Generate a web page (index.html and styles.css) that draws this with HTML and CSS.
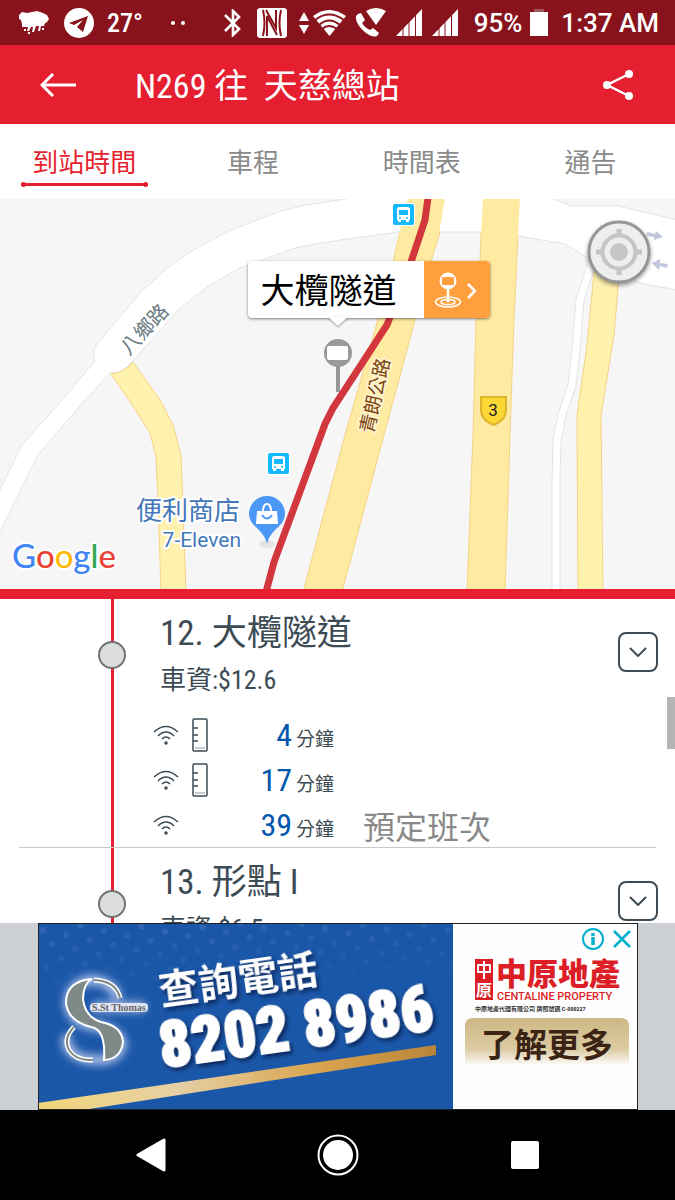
FILE: index.html
```html
<!DOCTYPE html>
<html lang="zh-Hant">
<head>
    <meta charset="UTF-8">
    <meta name="viewport" content="width=device-width, initial-scale=1.0">
    <title>N269 往 天慈總站</title>
    <link rel="stylesheet" href="styles.css">
</head>
<body>
    <!-- 系統狀態列 -->
    <div class="status">
        <svg width="32" height="24" viewBox="0 0 32 24" fill="#fff"><path d="M1 4 4 1 9 2 14 1 19 0 25 2 29 4 31 8 29 11 26 13H4L3 9 1 8z"/><path d="M4 12H27L26 15H23L22 20H20L21 15H18L16 21H14L15 16H13L11 20H9L10 16H4z"/><path d="M6 18h2v2H6zM10 21h2v2h-2zM24 17h2v2h-2z"/></svg>
        <svg class="telegram" width="30" height="30" viewBox="0 0 30 30"><circle cx="15" cy="15" r="15" fill="#fff"/><path d="M5 15 24 8 19 24 13 19 19 12 10 17z" fill="#89131c"/></svg>
        <span class="temp">27°</span>
        <svg class="dots" width="14" height="4" viewBox="0 0 14 4" fill="#fff"><circle cx="2" cy="2" r="2"/><circle cx="12" cy="2" r="2"/></svg>
        <div class="status-right">
            <svg width="18" height="28" viewBox="0 0 18 28" fill="none" stroke="#fff" stroke-width="2.6"><path d="M1 6 15 20 9 26V2l6 6L1 22"/></svg>
            <svg class="nfc" width="30" height="30" viewBox="0 0 30 30"><path d="M2 0h26l2 2v26l-2 2H2l-2-2V2z" fill="#fff"/><path d="M6 2Q9 15 6 28M10 28V8L20 27M9 2 19 20V2M24 2Q21 15 24 28" fill="none" stroke="#89131c" stroke-width="2"/></svg>
            <svg width="10" height="22" viewBox="0 0 10 22" fill="#fff"><path d="M5 0l5 9H0zM5 22l5-9H0z"/></svg>
            <svg class="wifi" width="33" height="26" viewBox="0 0 33 26"><path d="M0 6Q16-6 33 6L16.500 26z" fill="#fff"/><path d="M2 10Q16-1 31 10M6 15Q16 6 27 15M9 19Q16 13 24 19" fill="none" stroke="#89131c" stroke-width="1.8"/></svg>
            <svg width="30" height="29" viewBox="0 0 30 29" fill="#fff"><path d="M10 3Q20-3 30 3L20 17z"/><path d="M2 6 5 5 9 12 6 15Q9 20 14 22L17 20 23 25 21 28Q17 30 10 25Q-1 16 0 8z"/></svg>
            <svg width="26" height="27" viewBox="0 0 26 27"><path d="M0 27 26 0V27z" fill="#fff"/><path d="M7 16V27M13 10V27M19.500 4V27" stroke="#89131c" stroke-width="1"/></svg>
            <svg width="26" height="27" viewBox="0 0 26 27"><path d="M0 27 26 0V27z" fill="#fff"/><path d="M7 16V27M13 10V27M19.500 4V27" stroke="#89131c" stroke-width="1"/></svg>
            <span class="percent">95%</span>
            <svg class="battery" width="18" height="27" viewBox="0 0 18 27"><path d="M4 0h10v4H4z" fill="#a4565c"/><path d="M0 3h18v24H0z" fill="#fff"/></svg>
            <span class="clock">1:37 AM</span>
        </div>
    </div>

    <header class="topbar">
        <button class="icon-btn" aria-label="返回"><svg width="36" height="24" viewBox="0 0 36 24" fill="none" stroke="#fff" stroke-width="3"><path d="M36 12H3M13 1 2 12 13 23"/></svg></button>
        <h1>N269 往&nbsp; 天慈總站</h1>
        <button class="icon-btn share" aria-label="分享"><svg width="30" height="30" viewBox="0 0 30 30" fill="#fff"><path d="M26 4 4 15 26 26" fill="none" stroke="#fff" stroke-width="2.500"/><circle cx="26" cy="4" r="4"/><circle cx="4" cy="15" r="4"/><circle cx="26" cy="26" r="4"/></svg></button>
    </header>

    <nav class="tabs">
        <button class="tab active">到站時間</button>
        <button class="tab">車程</button>
        <button class="tab">時間表</button>
        <button class="tab">通告</button>
    </nav>

    <!-- 地圖 -->
    <div class="map">
        <svg class="map-art" viewBox="0 199 675 390" preserveAspectRatio="xMidYMid slice">
            <defs>
                <g id="bus">
                    <rect x="-1" y="-1" width="23" height="23" rx="3" fill="#fff"/>
                    <rect width="21" height="21" rx="2" fill="#14b9ff"/>
                    <path d="M4 5Q4 3 7 3H14Q17 3 17 5V16H16V18H13V16H8V18H5V16H4z" fill="#fff"/>
                    <path d="M6 6H15V11H6z" fill="#14b9ff"/>
                    <circle cx="7" cy="14" r="1" fill="#14b9ff"/><circle cx="14" cy="14" r="1" fill="#14b9ff"/>
                </g>
            </defs>
            <rect x="0" y="199" width="675" height="390" fill="#f6f6f6"/>
            <path d="M592 262 580 300 576 350 572 385 562 415 557 440 556 480V595" fill="none" stroke="#e4e4e4" stroke-width="9"/>
            <path d="M592 262 580 300 576 350 572 385 562 415 557 440 556 480V595" fill="none" stroke="#fff" stroke-width="7"/>
            <path d="M-2 494 22 445 62 400 95 361Q91 352 97 344L140 293 165 270 190 252 226 232 281 211 306 205 352 198H550L572 206 618 206 677 220V290L640 283 590 259 565 244 518 236 481 232H398L340 240 315 244 295 248 240 268 210 285 180 308 132 362Q122 374 110 373L85 400 37 456-2 536z" fill="#fff" stroke="#e4e4e4"/>
            <g fill="#ffeaa1" stroke="#f6d386">
                <path d="M111 374 129 400 150 433 156 457 158 500 161 592H186L182 480 181 455 173 425 160 400 133 362Q124 373 111 374z" fill="#fff1ae"/>
                <path d="M594 272 587 345 577 415 578 592H603L601 415 614 335 619 276z" fill="#fff1ae"/>
                <path d="M400 232 393 262 375 330 345 435 303 592H342L384 435 415 320 431 262 440 232z"/>
                <path d="M481 232 480 262 476 320 473 435 467 592H505L510 435 514 320 518 235z"/>
            </g>
            <path d="M408 198H445L439 234H399zM483 198H520L518 237H481z" fill="#ffeaa1"/>
            <path d="M428 198 425 220 411 262 387 325 333 408 325 424 274 562 266 592" fill="none" stroke="#d1373d" stroke-width="7"/>
            <g fill="#c3c8de"><path d="M647 232l8 2 1-3 7 6-9 3v-3l-7-1zM668 264l-8-1v-4l-8 4 7 7 1-4 7 2z"/></g>
            <use href="#bus" x="393" y="204"/>
            <use href="#bus" x="268" y="453"/>
            <path d="M481 397H506V410Q506 420 493.500 425Q481 420 481 410z" fill="#fdd835" stroke="#dcb52f" stroke-width="2"/>
            <text class="route-no" x="493" y="416" text-anchor="middle">3</text>
            <text class="road-name" transform="translate(129 356) rotate(-47)">八鄉路</text>
            <text class="highway-name" transform="translate(373 434) rotate(-77)">青朗公路</text>
            <text class="place" x="240" y="520" text-anchor="end">便利商店</text>
            <text class="place-en" x="241" y="547" text-anchor="end">7-Eleven</text>
            <ellipse cx="267" cy="544" rx="8" ry="4" fill="#e4e4e4"/>
            <path d="M267 544Q266 537 258 529Q249 522 249 514A18 18 0 0 1 285 514Q285 522 276 529Q268 537 267 544z" fill="#4c98f6"/>
            <path d="M257 511H277L278 524H256z" fill="#fff"/>
            <path d="M263 512Q263 504 267 504Q271 504 271 512" fill="none" stroke="#fff" stroke-width="2"/>
            <path d="M262 515Q267 522 272 515" fill="none" stroke="#4c98f6" stroke-width="2"/>
            <text class="google" x="12" y="568"><tspan fill="#4285f4">G</tspan><tspan fill="#ea4335">o</tspan><tspan fill="#fbbc05">o</tspan><tspan fill="#4285f4">g</tspan><tspan fill="#34a853">l</tspan><tspan fill="#ea4335">e</tspan></text>
            <path d="M338 362V392" stroke="#959796" stroke-width="4"/>
            <circle cx="338" cy="353" r="14" fill="#989a99"/>
            <rect x="327" y="346" width="21" height="14" rx="2" fill="#fff"/>
        </svg>
        <div class="callout">
            <span class="callout-name">大欖隧道</span>
            <button class="callout-go" aria-label="車站詳情">
                <svg width="44" height="38" viewBox="0 0 44 38" fill="none" stroke="#fff" stroke-width="1.500"><ellipse cx="14" cy="31" rx="12.500" ry="5"/><ellipse cx="14" cy="31" rx="7" ry="2.500"/><path d="M14 16V31" stroke-width="2.500"/><circle cx="14" cy="10" r="8.500" fill="#fff" stroke="none"/><rect x="8" y="6" width="12" height="8" rx="1" fill="#ff9f3e" stroke="none"/><path d="M34 13l7 7-7 7" stroke-width="2.500"/></svg>
            </button>
        </div>
        <button class="locate" aria-label="我的位置"><svg width="66" height="66" viewBox="0 0 66 66" fill="none"><circle cx="33" cy="33" r="30" fill="#ecefee" stroke="#969696" stroke-width="3"/><circle cx="33" cy="33" r="16.500" stroke="#c5c5c5" stroke-width="4"/><circle cx="33" cy="33" r="9" fill="#c5c5c5"/><path d="M33 10V17M33 49V56M10 33H17M49 33H56" stroke="#c5c5c5" stroke-width="5"/></svg></button>
    </div>

    <!-- 車站列表 -->
    <main class="stops">
        <section class="stop">
            <div class="rail"></div>
            <div class="stop-info">
                <h2>12. 大欖隧道</h2>
                <p class="fare">車資:$12.6</p>
                <ul class="etas">
                    <li>
                        <svg width="26" height="20" viewBox="0 0 26 20" fill="none" stroke="#3d4b54" stroke-width="1.500"><path d="M1 7Q13-4 25 7M5 11Q13 3 21 11M9 14Q13 10 17 14"/><circle cx="13" cy="18" r="1" fill="#3d4b54"/></svg>
                        <svg width="16" height="34" viewBox="0 0 16 34" fill="none" stroke="#3d4b54" stroke-width="1.500"><rect x="1" y="1" width="14" height="32" rx="1"/><path d="M1 10H6M1 17H6M1 23H6"/><path d="M3 30H13" stroke="#bbb"/></svg>
                        <b>4</b><span>分鐘</span>
                    </li>
                    <li>
                        <svg width="26" height="20" viewBox="0 0 26 20" fill="none" stroke="#3d4b54" stroke-width="1.500"><path d="M1 7Q13-4 25 7M5 11Q13 3 21 11M9 14Q13 10 17 14"/><circle cx="13" cy="18" r="1" fill="#3d4b54"/></svg>
                        <svg width="16" height="34" viewBox="0 0 16 34" fill="none" stroke="#3d4b54" stroke-width="1.500"><rect x="1" y="1" width="14" height="32" rx="1"/><path d="M1 10H6M1 17H6M1 23H6"/><path d="M3 30H13" stroke="#bbb"/></svg>
                        <b>17</b><span>分鐘</span>
                    </li>
                    <li>
                        <svg width="26" height="20" viewBox="0 0 26 20" fill="none" stroke="#3d4b54" stroke-width="1.500"><path d="M1 7Q13-4 25 7M5 11Q13 3 21 11M9 14Q13 10 17 14"/><circle cx="13" cy="18" r="1" fill="#3d4b54"/></svg>
                        <b>39</b><span>分鐘</span><em>預定班次</em>
                    </li>
                </ul>
            </div>
            <button class="toggle" aria-label="展開"><svg width="18" height="10" viewBox="0 0 18 10" fill="none" stroke="#3d4b54" stroke-width="2"><path d="M1 1l8 8 8-8"/></svg></button>
        </section>
        <section class="stop">
            <div class="rail"></div>
            <div class="stop-info">
                <h2>13. 形點 I</h2>
                <p class="fare">車資:$6.5</p>
            </div>
            <button class="toggle" aria-label="展開"><svg width="18" height="10" viewBox="0 0 18 10" fill="none" stroke="#3d4b54" stroke-width="2"><path d="M1 1l8 8 8-8"/></svg></button>
        </section>
        <div class="thumb"></div>
    </main>

    <!-- 廣告 -->
    <aside class="ad">
        <div class="ad-box">
            <a href="#">
                <svg class="ad-art" viewBox="0 0 600 187">
                    <defs>
                        <linearGradient id="gold"><stop offset="0" stop-color="#f2d67a"/><stop offset=".35" stop-color="#e6cfa4"/><stop offset=".7" stop-color="#d9a550"/><stop offset="1" stop-color="#b98538"/></linearGradient>
                        <linearGradient id="tan" x2="0" y2="1"><stop offset="0" stop-color="#cdb884"/><stop offset=".65" stop-color="#dccba2"/><stop offset="1" stop-color="#fff"/></linearGradient>
                        <pattern id="spots" width="24" height="24" patternUnits="userSpaceOnUse" patternTransform="rotate(12)"><circle cx="6" cy="6" r="3" fill="#3f6db6"/><circle cx="18" cy="18" r="3" fill="#3f6db6"/></pattern>
                        <linearGradient id="fade" x2=".3" y2="1"><stop offset="0" stop-color="#1b57a8" stop-opacity="0"/><stop offset="1" stop-color="#1b57a8"/></linearGradient>
                        <filter id="glow" x="-30%" y="-30%" width="160%" height="160%"><feGaussianBlur stdDeviation="4"/></filter>
                    </defs>
                    <rect width="600" height="187" fill="#fefefe"/>
                    <rect width="415" height="187" fill="#1b57a8"/>
                    <rect width="415" height="70" fill="url(#spots)" opacity=".7"/>
                    <rect width="415" height="71" fill="url(#fade)"/>
                    <path d="M0 180 398 122V132L45 187H0z" fill="url(#gold)"/>
                    <g fill="none" stroke="#b9c7ee" stroke-width="9" filter="url(#glow)"><path d="M80 76Q74 56 50 57Q28 64 31 84Q35 100 55 103Q81 106 84 121Q81 138 57 137Q25 135 29 112"/><path d="M55 84H107"/></g>
                    <path d="M54 56Q28 58 28 80Q30 98 53 104Q68 106 66 137Q83 136 85 119Q84 103 63 99Q47 94 45 76Q45 61 54 56z" fill="#7f8987" stroke="#fff" stroke-width="2"/>
                    <path d="M56 57Q78 58 82 75M36 104Q25 115 31 127Q38 138 55 137" fill="none" stroke="#fff" stroke-width="5"/>
                    <path d="M56 57Q78 58 82 75M36 104Q25 115 31 127Q38 138 55 137" fill="none" stroke="#7f8987" stroke-width="2"/>
                    <rect x="52" y="80" width="58" height="9" rx="4" fill="#dfe4f2"/>
                    <text class="ad-school" x="54" y="88">S.St Thomas</text>
                    <text class="ad-call" transform="translate(123 82) rotate(-8)">查詢電話</text>
                    <text class="ad-phone" transform="translate(124 145) rotate(-8)">8202 8986</text>
                    <rect x="437" y="36" width="18" height="41" fill="#dc1f26"/>
                    <path d="M440 42H452V49H440zM446 38V56" fill="none" stroke="#fff" stroke-width="2"/>
                    <text class="ad-seal" x="446" y="73" text-anchor="middle">原</text>
                    <text class="ad-brand" x="458" y="62">中原地產</text>
                    <text class="ad-brand-en" x="459" y="77">CENTALINE PROPERTY</text>
                    <text class="ad-small" x="437" y="88">中原地產代理有限公司 牌照號碼 C-000227</text>
                    <path d="M427 143V103Q427 95 435 95H583Q591 95 591 103V143z" fill="url(#tan)"/>
                    <text class="ad-more" x="509" y="134" text-anchor="middle">了解更多</text>
                </svg>
            </a>
            <div class="ad-tools">
                <button aria-label="廣告資訊"><svg width="22" height="22" viewBox="0 0 22 22" fill="none" stroke="#00aecd"><circle cx="11" cy="11" r="10" stroke-width="2"/><path d="M11 5V8M11 9V17" stroke-width="3.500"/></svg></button>
                <button aria-label="關閉廣告"><svg width="18" height="18" viewBox="0 0 18 18" stroke="#00aecd" stroke-width="2.500"><path d="M1 1l16 16M17 1 1 17"/></svg></button>
            </div>
        </div>
    </aside>

    <nav class="android-nav">
        <button aria-label="Back"><svg width="30" height="36" viewBox="0 0 30 36"><path d="M2 18 28 3V33z" fill="#fff" stroke="#fff" stroke-width="3" stroke-linejoin="round"/></svg></button>
        <button aria-label="Home"><svg width="42" height="42" viewBox="0 0 42 42"><circle cx="21" cy="21" r="19.500" fill="none" stroke="#fff" stroke-width="2"/><circle cx="21" cy="21" r="15" fill="#fff"/></svg></button>
        <button aria-label="Recent"><svg width="28" height="28" viewBox="0 0 28 28"><rect width="28" height="28" rx="2" fill="#fff"/></svg></button>
    </nav>
</body>
</html>
```
FILE: styles.css
```css
*,*::after{
    box-sizing: border-box;
}
body{
    margin: 0;
    height: 100vh;
    display: flex;
    flex-direction: column;
    background: #fff;
    color: #3d4b54;
    font-family: "Roboto Condensed", "Liberation Sans Narrow", Roboto, "Noto Sans CJK TC", sans-serif;
}
button{
    padding: 0;
    border: 0;
    background: none;
    color: inherit;
    font: inherit;
}
svg{
    display: block;
    flex: none;
}
h1,h2,p,ul{
    margin: 0;
    padding: 0;
    font-weight: 400;
}

/* 狀態列 */
.status{
    flex: none;
    display: flex;
    align-items: center;
    height: 45px;
    padding: 0 16px 0 18px;
    background: #89131c;
    color: #fff;
    font-family: Roboto, sans-serif;
    font-size: 26px;
    font-weight: 500;
}
.telegram{
    margin-left: 14px;
}
.temp{
    margin-left: 13px;
    font-family: "Roboto Condensed", Roboto, sans-serif;
}
.dots{
    margin-left: 28px;
}
.status-right{
    display: flex;
    align-items: center;
    gap: 10px;
    margin-left: auto;
}
.nfc{
    margin: 0 2px 0 5px;
}
.wifi{
    margin-left: -6px;
}
.percent{
    margin-left: 6px;
}
.battery{
    margin-left: -2px;
}
.clock{
    margin-left: 3px;
}

/* 標題 */
.topbar{
    flex: none;
    display: flex;
    align-items: center;
    height: 79px;
    padding: 0 42px 0 40px;
    background: #e51f30;
    color: #fff;
}
.topbar h1{
    margin-left: 59px;
    padding-bottom: 3px;
    font-size: 34px;
}
.share{
    margin-left: auto;
}
.tabs{
    flex: none;
    display: flex;
    height: 75px;
}
.tab{
    position: relative;
    flex: 1;
    padding-bottom: 2px;
    color: #8a8a8a;
    font-size: 26px;
}
.tab.active{
    color: #e51f30;
}
.tab.active::after{
    content: "";
    position: absolute;
    left: 21px;
    right: 21px;
    bottom: 12px;
    height: 5px;
    background:
        radial-gradient(circle, #e51f30 2px, transparent 3px) left / 5px 5px no-repeat,
        radial-gradient(circle, #e51f30 2px, transparent 3px) right / 5px 5px no-repeat,
        linear-gradient(#e51f30, #e51f30) center / 100% 3px no-repeat;
}

/* 地圖 */
.map{
    flex: none;
    position: relative;
    height: 400px;
    border-bottom: 10px solid #e51f30;
    overflow: hidden;
}
.map-art{
    width: 100%;
    height: 100%;
}
.map-art text{
    paint-order: stroke;
    stroke: #fff;
    stroke-width: 4px;
    stroke-linejoin: round;
}
.map-art .route-no{
    font: 400 17px Roboto, sans-serif;
    fill: #222;
    stroke: none;
}
.road-name{
    font-size: 20px;
    fill: #6b7b83;
}
.map-art .highway-name{
    font-size: 19px;
    fill: #7a4310;
    stroke: #fff3cd;
}
.place{
    font-size: 26px;
    fill: #4377b9;
}
.place-en{
    font-family: Roboto, sans-serif;
    font-size: 21px;
    fill: #4377b9;
}
.google{
    font-family: Lato, sans-serif;
    font-size: 33px;
    font-weight: 500;
}
.callout{
    position: absolute;
    top: 62px;
    left: 50%;
    display: flex;
    height: 57px;
    margin-left: -90px;
    border-radius: 4px;
    background: #fff;
    box-shadow: 0 1px 3px rgba(0,0,0,.5);
    color: #000;
}
.callout::after{
    content: "";
    position: absolute;
    left: 80px;
    top: 56px;
    border: 10px solid transparent;
    border-top: 9px solid #fff;
    border-bottom: 0;
    filter: drop-shadow(0 1px 1px rgba(0,0,0,.4));
}
.callout-name{
    padding: 0 27px 0 13px;
    font-size: 34px;
    line-height: 60px;
}
.callout-go{
    width: 66px;
    padding-left: 10px;
    border-radius: 0 4px 4px 0;
    background: #ff9f3e;
}
.locate{
    position: absolute;
    top: 20px;
    right: 23px;
    border-radius: 50%;
    filter: drop-shadow(0 2px 2px rgba(0,0,0,.4));
}

/* 車站 */
.stops{
    position: relative;
    flex: 1;
    min-height: 0;
    overflow: hidden;
}
.stop{
    display: flex;
    margin: 0 19px;
    border-bottom: 1px solid #c8c8c8;
}
.rail{
    flex: none;
    position: relative;
    width: 141px;
    background: linear-gradient(#e51f30, #e51f30) 92px 0 / 3px 100% no-repeat;
}
.rail::after{
    content: "";
    position: absolute;
    left: 79px;
    top: 42px;
    width: 28px;
    height: 28px;
    border: 2px solid #737373;
    border-radius: 50%;
    background: #dcdedd;
}
.stop-info{
    flex: 1;
    padding: 11px 0 0;
}
.stop h2{
    font-size: 35px;
    line-height: 48px;
}
.fare{
    font-size: 26px;
    line-height: 44px;
}
.etas{
    margin: 10px 0 0 -7px;
    list-style: none;
}
.etas li{
    display: flex;
    align-items: center;
    height: 45px;
}
.etas svg + svg{
    margin-left: 13px;
}
.etas b{
    width: 84px;
    color: #0058ae;
    font-size: 32px;
    font-weight: 400;
    text-align: right;
}
.etas svg:first-child + b{
    width: 113px;
}
.etas span{
    margin: 6px 0 0 4px;
    font-size: 19px;
}
.etas em{
    margin-left: 29px;
    color: #8a8a8a;
    font-size: 32px;
    font-style: normal;
}
.toggle{
    flex: none;
    display: flex;
    align-items: center;
    justify-content: center;
    width: 40px;
    height: 40px;
    margin: 33px -2px 0 0;
    border: 2px solid #3d4b54;
    border-radius: 8px;
}
.thumb{
    position: absolute;
    top: 98px;
    right: 0;
    width: 8px;
    height: 52px;
    background: #b5b5b5;
}

/* 廣告 */
.ad{
    flex: none;
    background: #ccd0d5;
}
.ad-box{
    position: relative;
    max-width: 600px;
    margin: 0 auto;
}
.ad-art{
    width: 100%;
    outline: 1px solid #222;
    outline-offset: -1px;
}
.ad-tools{
    position: absolute;
    top: 5px;
    right: 7px;
    display: flex;
    align-items: center;
    gap: 9px;
}
.ad-school{
    font: 700 10px "Liberation Serif", serif;
    fill: #666;
}
.ad-call,.ad-phone{
    fill: #fff;
    filter: drop-shadow(2px 3px 2px rgba(5,25,70,.8));
}
.ad-call{
    font-size: 40px;
    font-weight: 700;
}
.ad-phone{
    font-size: 64px;
    font-weight: 900;
    stroke: #fff;
    stroke-width: 2px;
}
.ad-seal{
    font-size: 16px;
    font-weight: 700;
    fill: #fff;
}
.ad-brand{
    font-size: 31px;
    font-weight: 900;
    fill: #dc1f26;
}
.ad-brand-en{
    font: 500 11px Roboto, sans-serif;
    fill: #dc1f26;
}
.ad-small{
    font-size: 6px;
    font-weight: 700;
    fill: #333;
}
.ad-more{
    font-size: 33px;
    font-weight: 700;
    fill: #3c2415;
}

/* 系統導覽列 */
.android-nav{
    flex: none;
    display: flex;
    align-items: center;
    justify-content: center;
    height: 90px;
    background: #000;
}
.android-nav button{
    display: flex;
    justify-content: center;
    width: 187px;
}
```
